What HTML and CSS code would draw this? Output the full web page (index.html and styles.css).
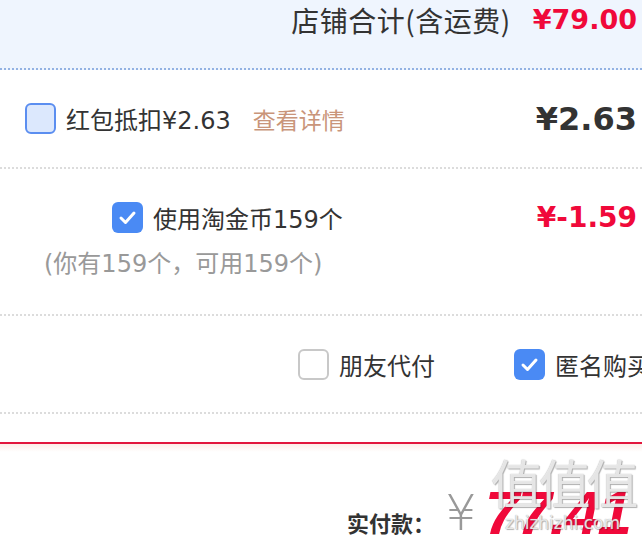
FILE: index.html
```html
<!DOCTYPE html>
<html>
<head>
<meta name="viewport" content="width=device-width, initial-scale=1">
<link rel="stylesheet" href="styles.css">
</head>
<body>

<div class="page">
  <div class="shop-total">
    <span class="total-label">店铺合计(含运费)</span>
    <span class="total-price">¥79.00</span>
  </div>

  <div class="row">
    <span class="box box-light"></span>
    <span class="row-text">红包抵扣¥2.63</span>
    <span class="detail-link">查看详情</span>
    <span class="row-price">¥2.63</span>
  </div>

  <div class="row row-coins">
    <div class="coins-line">
      <span class="box box-on">
        <svg width="31" height="31" viewBox="0 0 31 31"><path d="M9 16 L13.5 20.5 L22 11" fill="none" stroke="#fff" stroke-width="3" stroke-linecap="round" stroke-linejoin="round"/></svg>
      </span>
      <span class="row-text">使用淘金币159个</span>
      <span class="row-price red">¥-1.59</span>
    </div>
    <div class="coins-note">(你有159个，可用159个)</div>
  </div>

  <div class="row row-options">
    <span class="box box-grey"></span>
    <span class="row-text">朋友代付</span>
    <span class="box box-on option-gap">
      <svg width="31" height="31" viewBox="0 0 31 31"><path d="M9 16 L13.5 20.5 L22 11" fill="none" stroke="#fff" stroke-width="3" stroke-linecap="round" stroke-linejoin="round"/></svg>
    </span>
    <span class="row-text">匿名购买</span>
  </div>

  <div class="spacer"></div>

  <div class="pay-bar">
    <span class="pay-label">实付款：</span>
    <span class="pay-yen">¥</span>
    <span class="pay-price">77.41</span>
    <div class="watermark">
      <span class="wm-main">值值值</span>
      <span class="wm-sub">zhizhizhi.com</span>
    </div>
  </div>
</div>

</body>
</html>
```

FILE: styles.css
```css
body {
  margin: 0;
  background: #fff;
  font-family: "Noto Sans CJK SC", "Noto Sans", sans-serif;
  color: #333;
}

* {
  box-sizing: border-box;
}

.page {
  width: 642px;
  height: 548px;
  overflow: hidden;
}

/* Shop total header */
.shop-total {
  height: 70px;
  background: #eff5fe;
  border-bottom: 2px dotted #93b2e3;
  display: flex;
  justify-content: flex-end;
  align-items: flex-start;
  gap: 22px;
  padding: 0 5px 0 0;
}

.total-label {
  font-size: 28px;
  line-height: 40px;
  letter-spacing: 0.5px;
}

.total-price {
  font-family: "DejaVu Sans", sans-serif;
  font-weight: bold;
  font-size: 27px;
  line-height: 40px;
  color: #f0093a;
}

/* Rows */
.row {
  height: 99px;
  border-bottom: 2px dotted #dcdcdc;
  display: flex;
  align-items: center;
  padding: 0 5px 0 25px;
  white-space: nowrap;
  overflow: hidden;
}

.box {
  flex: none;
  width: 31px;
  height: 31px;
  border-radius: 6px;
  margin-right: 10px;
}

.box svg {
  display: block;
}

.box-light {
  border: 2px solid #5b8ef0;
  background: #dce8fd;
}

.box-grey {
  border: 2px solid #c8c8c8;
  background: #fff;
}

.box-on {
  background: #4a8af4;
}

.row-text {
  font-family: "DejaVu Sans", "Noto Sans CJK SC", sans-serif;
  font-size: 24px;
}

.detail-link {
  font-size: 23px;
  color: #c9957a;
  margin-left: 22px;
}

.row-price {
  margin-left: auto;
  font-family: "DejaVu Sans", sans-serif;
  font-weight: bold;
  font-size: 32px;
  color: #333;
}

.row-price.red {
  font-size: 28px;
  color: #f0093a;
}

/* Gold coins row */
.row-coins {
  height: 147px;
  flex-direction: column;
  align-items: stretch;
  justify-content: flex-start;
  padding: 31px 5px 0 44px;
}

.coins-line {
  display: flex;
  align-items: center;
  padding-left: 68px;
}

.coins-note {
  font-family: "DejaVu Sans", "Noto Sans CJK SC", sans-serif;
  font-size: 24px;
  color: #999;
  margin-top: 9px;
}

/* Options row */
.row-options {
  height: 98px;
  padding-left: 298px;
}

.option-gap {
  margin-left: 79px;
}

.spacer {
  height: 30px;
  border-bottom: 2px solid #e2173d;
}

/* Pay bar */
.pay-bar {
  position: relative;
  height: 100px;
  background: linear-gradient(#fdeee8 0, #fff 8px);
  display: flex;
  align-items: flex-end;
  padding: 0 0 0 347px;
}

.pay-label {
  font-size: 22px;
  font-weight: bold;
  margin-bottom: 6px;
}

.pay-yen {
  font-family: "DejaVu Sans", sans-serif;
  font-weight: 200;
  font-size: 50px;
  color: #999;
  margin-left: 10px;
  margin-bottom: 2px;
}

.pay-price {
  font-family: "Liberation Sans", sans-serif;
  font-weight: bold;
  font-style: italic;
  font-size: 62px;
  letter-spacing: -2px;
  line-height: 62px;
  color: #f0093a;
  margin-left: 8px;
}

/* Site watermark over the price */
.watermark {
  position: absolute;
  left: 490px;
  top: 6px;
  width: 145px;
  display: flex;
  flex-direction: column;
  align-items: center;
  color: rgba(255, 255, 255, 0.75);
  text-shadow: 0 0 1px #999, 1px 1px 1px rgba(0, 0, 0, 0.3);
}

.wm-main {
  font-size: 52px;
  line-height: 64px;
  letter-spacing: -4px;
}

.wm-sub {
  font-family: "DejaVu Sans", sans-serif;
  font-size: 17px;
  line-height: 18px;
}
```
